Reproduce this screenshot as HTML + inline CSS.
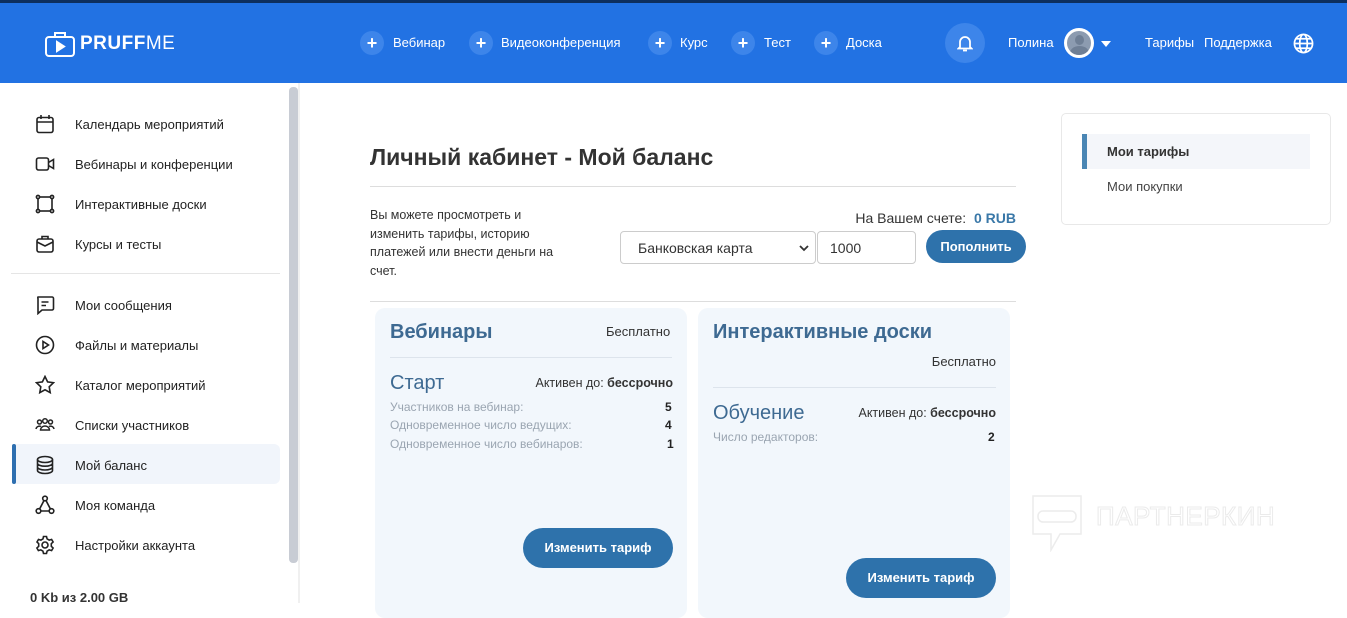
<!DOCTYPE html>
<html><head><meta charset="utf-8"><style>
*{margin:0;padding:0;box-sizing:border-box}
body{width:1347px;height:603px;overflow:hidden;background:#fff;font-family:"Liberation Sans",sans-serif;position:relative;color:#222}
.a{position:absolute;white-space:nowrap}
#hdr{position:absolute;left:0;top:0;width:1347px;height:83px;background:#2272e3;border-top:3px solid #0d2f5e}
.plus{position:absolute;width:24px;height:24px;border-radius:50%;background:#3d85ea;color:#fff;font-size:18px;font-weight:bold;text-align:center;line-height:24px}
.nav{position:absolute;color:#fff;font-size:13px;top:35px}
.side{position:absolute;left:75px;font-size:13px;color:#222}
.ic{position:absolute;left:35px}
.card{position:absolute;background:#f2f7fc;border-radius:10px}
.btn{position:absolute;background:#2e72ab;color:#fff;font-size:13px;font-weight:bold;border-radius:20px;text-align:center;height:40px;line-height:40px;width:150px}
.g{color:#9aa5b1;font-size:12px}
.b{font-weight:bold;font-size:12px}
</style></head><body>
<div id="hdr"></div>
<svg class="a" style="left:45px;top:31px" width="30" height="26" viewBox="0 0 30 26" fill="none" stroke="#fff" stroke-width="2"><rect x="1" y="6" width="28" height="19" rx="3"/><path d="M10 6V2h10v4"/><path d="M12 11v9l7-4.5z" fill="#fff"/></svg>
<div class="a" style="left:80px;top:33px;color:#fff;font-size:19px;font-weight:bold;letter-spacing:0.5px">PRUFF<span style="font-weight:normal">ME</span></div>
<div class="plus" style="left:360px;top:31px">+</div><div class="nav" style="left:393px">Вебинар</div>
<div class="plus" style="left:469px;top:31px">+</div><div class="nav" style="left:501px">Видеоконференция</div>
<div class="plus" style="left:648px;top:31px">+</div><div class="nav" style="left:680px">Курс</div>
<div class="plus" style="left:731px;top:31px">+</div><div class="nav" style="left:764px">Тест</div>
<div class="plus" style="left:814px;top:31px">+</div><div class="nav" style="left:846px">Доска</div>
<div class="a" style="left:945px;top:23px;width:40px;height:40px;border-radius:50%;background:#3d85ea"></div>
<svg class="a" style="left:957px;top:34px" width="16" height="18" viewBox="0 0 16 18" fill="none" stroke="#fff" stroke-width="1.8"><path d="M3 13V8a5 5 0 0110 0v5l1.5 1.5h-13z"/><path d="M6 16.5h4"/></svg>
<div class="nav" style="left:1008px">Полина</div>
<div class="a" style="left:1064px;top:28px;width:30px;height:30px;border-radius:50%;background:#8c9bb0;border:3px solid #fff;overflow:hidden"><div style="position:absolute;left:8px;top:4px;width:9px;height:10px;border-radius:50%;background:#6f7f95"></div><div style="position:absolute;left:3px;top:15px;width:19px;height:14px;border-radius:50%;background:#6f7f95"></div></div>
<div class="a" style="left:1101px;top:41px;width:0;height:0;border-left:5px solid transparent;border-right:5px solid transparent;border-top:6px solid #fff"></div>
<div class="nav" style="left:1145px">Тарифы</div>
<div class="nav" style="left:1204px">Поддержка</div>
<svg class="a" style="left:1293px;top:33px" width="21" height="21" viewBox="0 0 22 22" fill="none" stroke="#fff" stroke-width="1.8"><circle cx="11" cy="11" r="9.5"/><ellipse cx="11" cy="11" rx="4" ry="9.5"/><path d="M1.5 11h19M3 6h16M3 16h16"/></svg>

<!-- sidebar -->
<div class="a" style="left:289px;top:87px;width:9px;height:476px;background:#c8ccd4;border-radius:4px"></div>
<div class="a" style="left:298px;top:83px;width:2px;height:520px;background:#f0f0f0"></div>
<div class="a" style="left:12px;top:444px;width:268px;height:40px;background:#f1f5fb;border-radius:6px"></div>
<div class="a" style="left:12px;top:444px;width:4px;height:40px;background:#2e6fb0;border-radius:2px"></div>
<div class="a" style="left:11px;top:273px;width:269px;height:1px;background:#e5e5e5"></div>
<svg class="ic" style="top:114px" width="20" height="20" viewBox="0 0 20 20" fill="none" stroke="#222" stroke-width="1.6"><rect x="2" y="3.5" width="16" height="15" rx="2"/><path d="M2 8h16M6 1v4M14 1v4"/></svg>
<div class="side" style="top:117px">Календарь мероприятий</div>
<svg class="ic" style="top:154px" width="20" height="20" viewBox="0 0 20 20" fill="none" stroke="#222" stroke-width="1.6"><rect x="1.5" y="4" width="12" height="12" rx="2"/><path d="M13.5 8.5l5-3v9l-5-3"/></svg>
<div class="side" style="top:157px">Вебинары и конференции</div>
<svg class="ic" style="top:194px" width="20" height="20" viewBox="0 0 20 20" fill="none" stroke="#222" stroke-width="1.6"><rect x="3" y="3" width="14" height="14"/><circle cx="3" cy="3" r="1.6" fill="#fff"/><circle cx="17" cy="3" r="1.6" fill="#fff"/><circle cx="3" cy="17" r="1.6" fill="#fff"/><circle cx="17" cy="17" r="1.6" fill="#fff"/></svg>
<div class="side" style="top:197px">Интерактивные доски</div>
<svg class="ic" style="top:234px" width="20" height="20" viewBox="0 0 20 20" fill="none" stroke="#222" stroke-width="1.6"><rect x="2" y="5" width="16" height="13" rx="2"/><path d="M7 5V2.5h6V5M2 8l8 4 8-4"/></svg>
<div class="side" style="top:237px">Курсы и тесты</div>
<svg class="ic" style="top:295px" width="20" height="20" viewBox="0 0 20 20" fill="none" stroke="#222" stroke-width="1.6"><path d="M3 2h14a1.5 1.5 0 011.5 1.5v10A1.5 1.5 0 0117 15H7l-4 3.5V3.5A1.5 1.5 0 013 2z"/><path d="M6.5 7h7M6.5 10.5h4.5"/></svg>
<div class="side" style="top:298px">Мои сообщения</div>
<svg class="ic" style="top:335px" width="20" height="20" viewBox="0 0 20 20" fill="none" stroke="#222" stroke-width="1.6"><circle cx="10" cy="10" r="8.5"/><path d="M8 6.5v7l5.5-3.5z"/></svg>
<div class="side" style="top:338px">Файлы и материалы</div>
<svg class="ic" style="top:375px" width="20" height="20" viewBox="0 0 20 20" fill="none" stroke="#222" stroke-width="1.6"><path d="M10 1.5l2.6 5.4 5.9.8-4.3 4.1 1 5.8L10 14.8l-5.2 2.8 1-5.8L1.5 7.7l5.9-.8z"/></svg>
<div class="side" style="top:378px">Каталог мероприятий</div>
<svg class="ic" style="top:415px" width="20" height="20" viewBox="0 0 20 20" fill="none" stroke="#222" stroke-width="1.5"><circle cx="10" cy="6" r="2.3"/><circle cx="4.5" cy="7" r="2"/><circle cx="15.5" cy="7" r="2"/><path d="M5.5 15a4.5 4 0 019 0zM1 14a3.5 3.5 0 015-2.5M19 14a3.5 3.5 0 00-5-2.5"/></svg>
<div class="side" style="top:418px">Списки участников</div>
<svg class="ic" style="top:455px" width="20" height="20" viewBox="0 0 20 20" fill="none" stroke="#222" stroke-width="1.6"><ellipse cx="10" cy="4.5" rx="7.5" ry="3"/><path d="M2.5 4.5v11c0 1.7 3.4 3 7.5 3s7.5-1.3 7.5-3v-11M2.5 8.2c0 1.7 3.4 3 7.5 3s7.5-1.3 7.5-3M2.5 12c0 1.7 3.4 3 7.5 3s7.5-1.3 7.5-3"/></svg>
<div class="side" style="top:458px">Мой баланс</div>
<svg class="ic" style="top:495px" width="20" height="20" viewBox="0 0 20 20" fill="none" stroke="#222" stroke-width="1.6"><circle cx="10" cy="3.5" r="2.3"/><circle cx="3.5" cy="16" r="2.3"/><circle cx="16.5" cy="16" r="2.3"/><path d="M9 5.5l-4.3 8.3M11 5.5l4.3 8.3M5.8 16h8.4"/></svg>
<div class="side" style="top:498px">Моя команда</div>
<svg class="ic" style="top:535px" width="20" height="20" viewBox="0 0 20 20" fill="none" stroke="#222" stroke-width="1.6"><circle cx="10" cy="10" r="3"/><path d="M8.5 1.5h3l.6 2.4 2.1 1.2 2.4-.7 1.5 2.6-1.8 1.7v2.6l1.8 1.7-1.5 2.6-2.4-.7-2.1 1.2-.6 2.4h-3l-.6-2.4-2.1-1.2-2.4.7-1.5-2.6 1.8-1.7V8.7L2 7l1.5-2.6 2.4.7 2.1-1.2z"/></svg>
<div class="side" style="top:538px">Настройки аккаунта</div>
<div class="a" style="left:30px;top:590px;font-size:13px;font-weight:bold;color:#333">0 Kb из 2.00 GB</div>

<!-- main -->
<div class="a" style="left:370px;top:144px;font-size:23px;font-weight:bold;color:#333">Личный кабинет - Мой баланс</div>
<div class="a" style="left:370px;top:186px;width:646px;height:1px;background:#ddd"></div>
<div class="a" style="left:370px;top:206px;font-size:12.5px;line-height:18.5px;color:#333">Вы можете просмотреть и<br>изменить тарифы, историю<br>платежей или внести деньги на<br>счет.</div>
<div class="a" style="right:331px;top:210px;font-size:14px;color:#333">На Вашем счете:&nbsp; <b style="color:#3a78a8">0 RUB</b></div>
<div class="a" style="left:620px;top:231px;width:196px;height:33px;border:1px solid #ccc;border-radius:4px;font-size:14px;color:#333;padding:8px 0 0 17px">Банковская карта<svg style="position:absolute;left:178px;top:12px" width="10" height="8" viewBox="0 0 10 8" fill="none" stroke="#333" stroke-width="1.8"><path d="M1 2l4 4 4-4"/></svg></div>
<div class="a" style="left:817px;top:231px;width:99px;height:33px;border:1px solid #ccc;border-radius:4px;font-size:14px;color:#333;padding:8px 0 0 12px">1000</div>
<div class="a" style="left:926px;top:230px;width:100px;height:33px;border-radius:17px;background:#2e72ab;color:#fff;font-size:13px;font-weight:bold;text-align:center;line-height:33px">Пополнить</div>
<div class="a" style="left:370px;top:301px;width:646px;height:1px;background:#ddd"></div>

<div class="card" style="left:375px;top:308px;width:312px;height:310px"></div>
<div class="a" style="left:390px;top:321px;font-size:20px;font-weight:bold;color:#3e6a92">Вебинары</div>
<div class="a" style="left:606px;top:324px;font-size:13px;color:#333">Бесплатно</div>
<div class="a" style="left:390px;top:357px;width:282px;height:1px;background:#dde4ec"></div>
<div class="a" style="left:390px;top:372px;font-size:20px;color:#3e6a92">Старт</div>
<div class="a" style="right:674px;top:376px;font-size:12.5px;color:#333">Активен до: <b>бессрочно</b></div>
<div class="a g" style="left:390px;top:400px">Участников на вебинар:</div><div class="a b" style="left:665px;top:400px">5</div>
<div class="a g" style="left:390px;top:418px">Одновременное число ведущих:</div><div class="a b" style="left:665px;top:418px">4</div>
<div class="a g" style="left:390px;top:437px">Одновременное число вебинаров:</div><div class="a b" style="left:667px;top:437px">1</div>
<div class="btn" style="left:523px;top:528px">Изменить тариф</div>

<div class="card" style="left:698px;top:308px;width:312px;height:310px"></div>
<div class="a" style="left:713px;top:321px;font-size:20px;font-weight:bold;color:#3e6a92">Интерактивные доски</div>
<div class="a" style="right:351px;top:354px;font-size:13px;color:#333">Бесплатно</div>
<div class="a" style="left:713px;top:387px;width:283px;height:1px;background:#dde4ec"></div>
<div class="a" style="left:713px;top:402px;font-size:20px;color:#3e6a92">Обучение</div>
<div class="a" style="right:351px;top:406px;font-size:12.5px;color:#333">Активен до: <b>бессрочно</b></div>
<div class="a g" style="left:713px;top:430px">Число редакторов:</div><div class="a b" style="left:988px;top:430px">2</div>
<div class="btn" style="left:846px;top:558px">Изменить тариф</div>

<!-- right panel -->
<div class="a" style="left:1061px;top:113px;width:270px;height:112px;border:1px solid #e8e8e8;border-radius:5px"></div>
<div class="a" style="left:1082px;top:134px;width:228px;height:35px;background:#f4f6fa"></div>
<div class="a" style="left:1082px;top:134px;width:5px;height:35px;background:#4a86b4"></div>
<div class="a" style="left:1107px;top:144px;font-size:13px;font-weight:bold;color:#333">Мои тарифы</div>
<div class="a" style="left:1107px;top:179px;font-size:13px;color:#444">Мои покупки</div>

<svg class="a" style="left:1030px;top:494px" width="54" height="58" viewBox="0 0 54 58" fill="none" stroke="#ececec" stroke-width="1.5"><path d="M3 2h48v38H30l-9 16v-16H3z"/><rect x="8" y="17" width="38" height="11" rx="5"/></svg>
<div class="a" style="left:1096px;top:501px;font-size:26px;color:#fff;-webkit-text-stroke:1px #ebebeb;letter-spacing:0.5px">ПАРТНЕРКИН</div>
</body></html>
